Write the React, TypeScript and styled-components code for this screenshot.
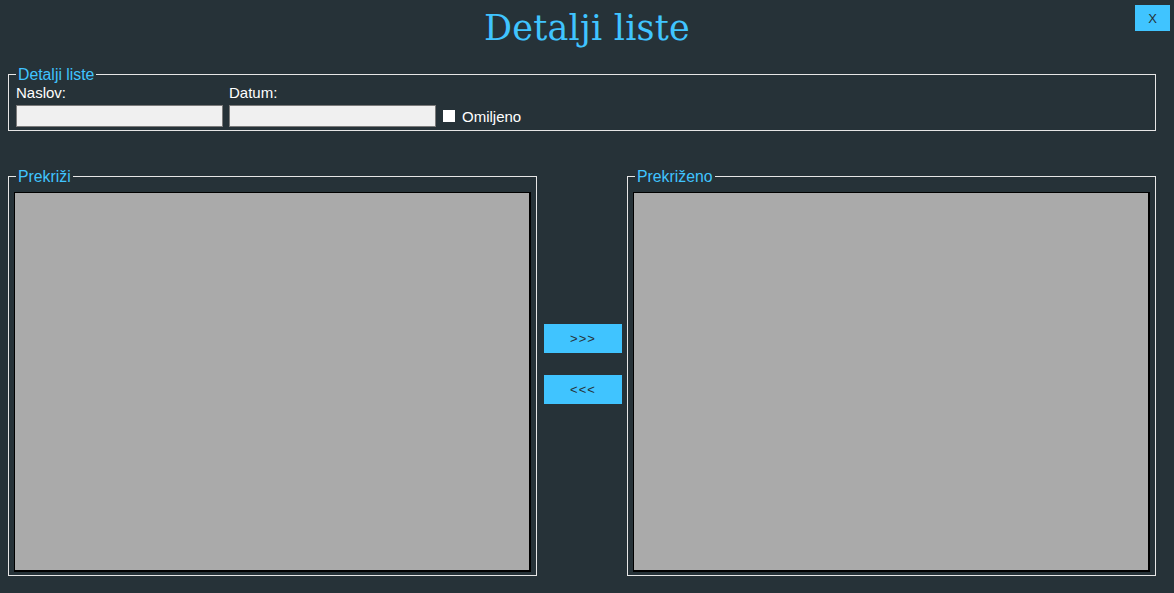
import React from "react";
import styled, { createGlobalStyle } from "styled-components";

const GlobalStyle = createGlobalStyle`
  html, body {
    margin: 0;
    padding: 0;
    background: #263238;
  }
  * { box-sizing: border-box; }
`;

const Page = styled.div`
  width: 1174px;
  height: 593px;
  background: #263238;
  font-family: "Liberation Sans", Arial, sans-serif;
  color: #ffffff;
  overflow: hidden;
`;

const Header = styled.header`
  display: grid;
  grid-template-columns: 1fr auto 1fr;
  height: 66px;
`;

const Title = styled.h1`
  grid-column: 2;
  margin: 8px 0 0;
  font-family: "DejaVu Serif", "Liberation Serif", serif;
  font-weight: normal;
  font-size: 35px;
  line-height: 41px;
  color: #40c4ff;
  letter-spacing: 0.2px;
`;

const CloseButton = styled.button`
  grid-column: 3;
  justify-self: end;
  align-self: start;
  margin: 5px 4px 0 0;
  width: 35px;
  height: 26px;
  border: none;
  padding: 0;
  background: #40c4ff;
  color: #263238;
  font-family: "Liberation Sans", Arial, sans-serif;
  font-size: 13px;
`;

const Group = styled.fieldset<{ $width: number }>`
  margin: 0;
  padding: 0 5px 3px 5px;
  width: ${(p) => p.$width}px;
  border: 1px solid #e6e6e6;
  min-inline-size: 0;
`;

const Legend = styled.legend<{ $offset: number }>`
  margin-left: ${(p) => p.$offset}px;
  padding: 0 2px;
  font-size: 15.8px;
  line-height: 17px;
  color: #40c4ff;
`;

const DetailsGroup = styled(Group)`
  margin-left: 8px;
  padding: 0 7px 3px 7px;
`;

const DetailsGrid = styled.div`
  display: grid;
  grid-template-columns: 207px 207px auto;
  column-gap: 6px;
  row-gap: 4px;
  align-items: end;
`;

const Label = styled.label`
  font-size: 15px;
  line-height: 17px;
  color: #ffffff;
  padding-top: 1px;
`;

const TextInput = styled.input`
  width: 207px;
  height: 22px;
  margin: 0;
  border: 1px solid #7a7a7a;
  background: #f0f0f0;
  padding: 0 3px;
  font-family: "Liberation Sans", Arial, sans-serif;
  font-size: 13px;
`;

const CheckRow = styled.label`
  display: flex;
  align-items: center;
  gap: 7px;
  height: 22px;
  margin-left: 1px;
  font-size: 15px;
  color: #ffffff;
`;

const CheckBox = styled.span`
  width: 12px;
  height: 12px;
  background: #ffffff;
`;

const BottomRow = styled.div`
  display: flex;
  margin: 37px 0 0 8px;
`;

const ListBox = styled.div`
  margin-top: 7px;
  width: 517px;
  height: 380px;
  background: #aaaaaa;
  border-top: 1px solid #000;
  border-left: 1px solid #000;
  border-right: 2px solid #000;
  border-bottom: 2px solid #000;
`;

const Middle = styled.div`
  width: 90px;
  display: flex;
  flex-direction: column;
  align-items: flex-start;
  gap: 22px;
  padding: 156px 0 0 7px;
`;

const MoveButton = styled.button`
  width: 78px;
  height: 29px;
  border: none;
  padding: 0;
  background: #40c4ff;
  color: #263238;
  font-family: "Liberation Sans", Arial, sans-serif;
  font-size: 13px;
  letter-spacing: 1px;
`;

export default function App() {
  return (
    <Page>
      <GlobalStyle />
      <Header>
        <Title>Detalji liste</Title>
        <CloseButton>X</CloseButton>
      </Header>
      <DetailsGroup $width={1148}>
        <Legend $offset={0}>Detalji liste</Legend>
        <DetailsGrid>
          <Label>Naslov:</Label>
          <Label>Datum:</Label>
          <span />
          <TextInput />
          <TextInput />
          <CheckRow>
            <CheckBox />
            Omiljeno
          </CheckRow>
        </DetailsGrid>
      </DetailsGroup>
      <BottomRow>
        <Group $width={529}>
          <Legend $offset={2}>Prekriži</Legend>
          <ListBox />
        </Group>
        <Middle>
          <MoveButton>&gt;&gt;&gt;</MoveButton>
          <MoveButton>&lt;&lt;&lt;</MoveButton>
        </Middle>
        <Group $width={529}>
          <Legend $offset={2}>Prekriženo</Legend>
          <ListBox />
        </Group>
      </BottomRow>
    </Page>
  );
}
